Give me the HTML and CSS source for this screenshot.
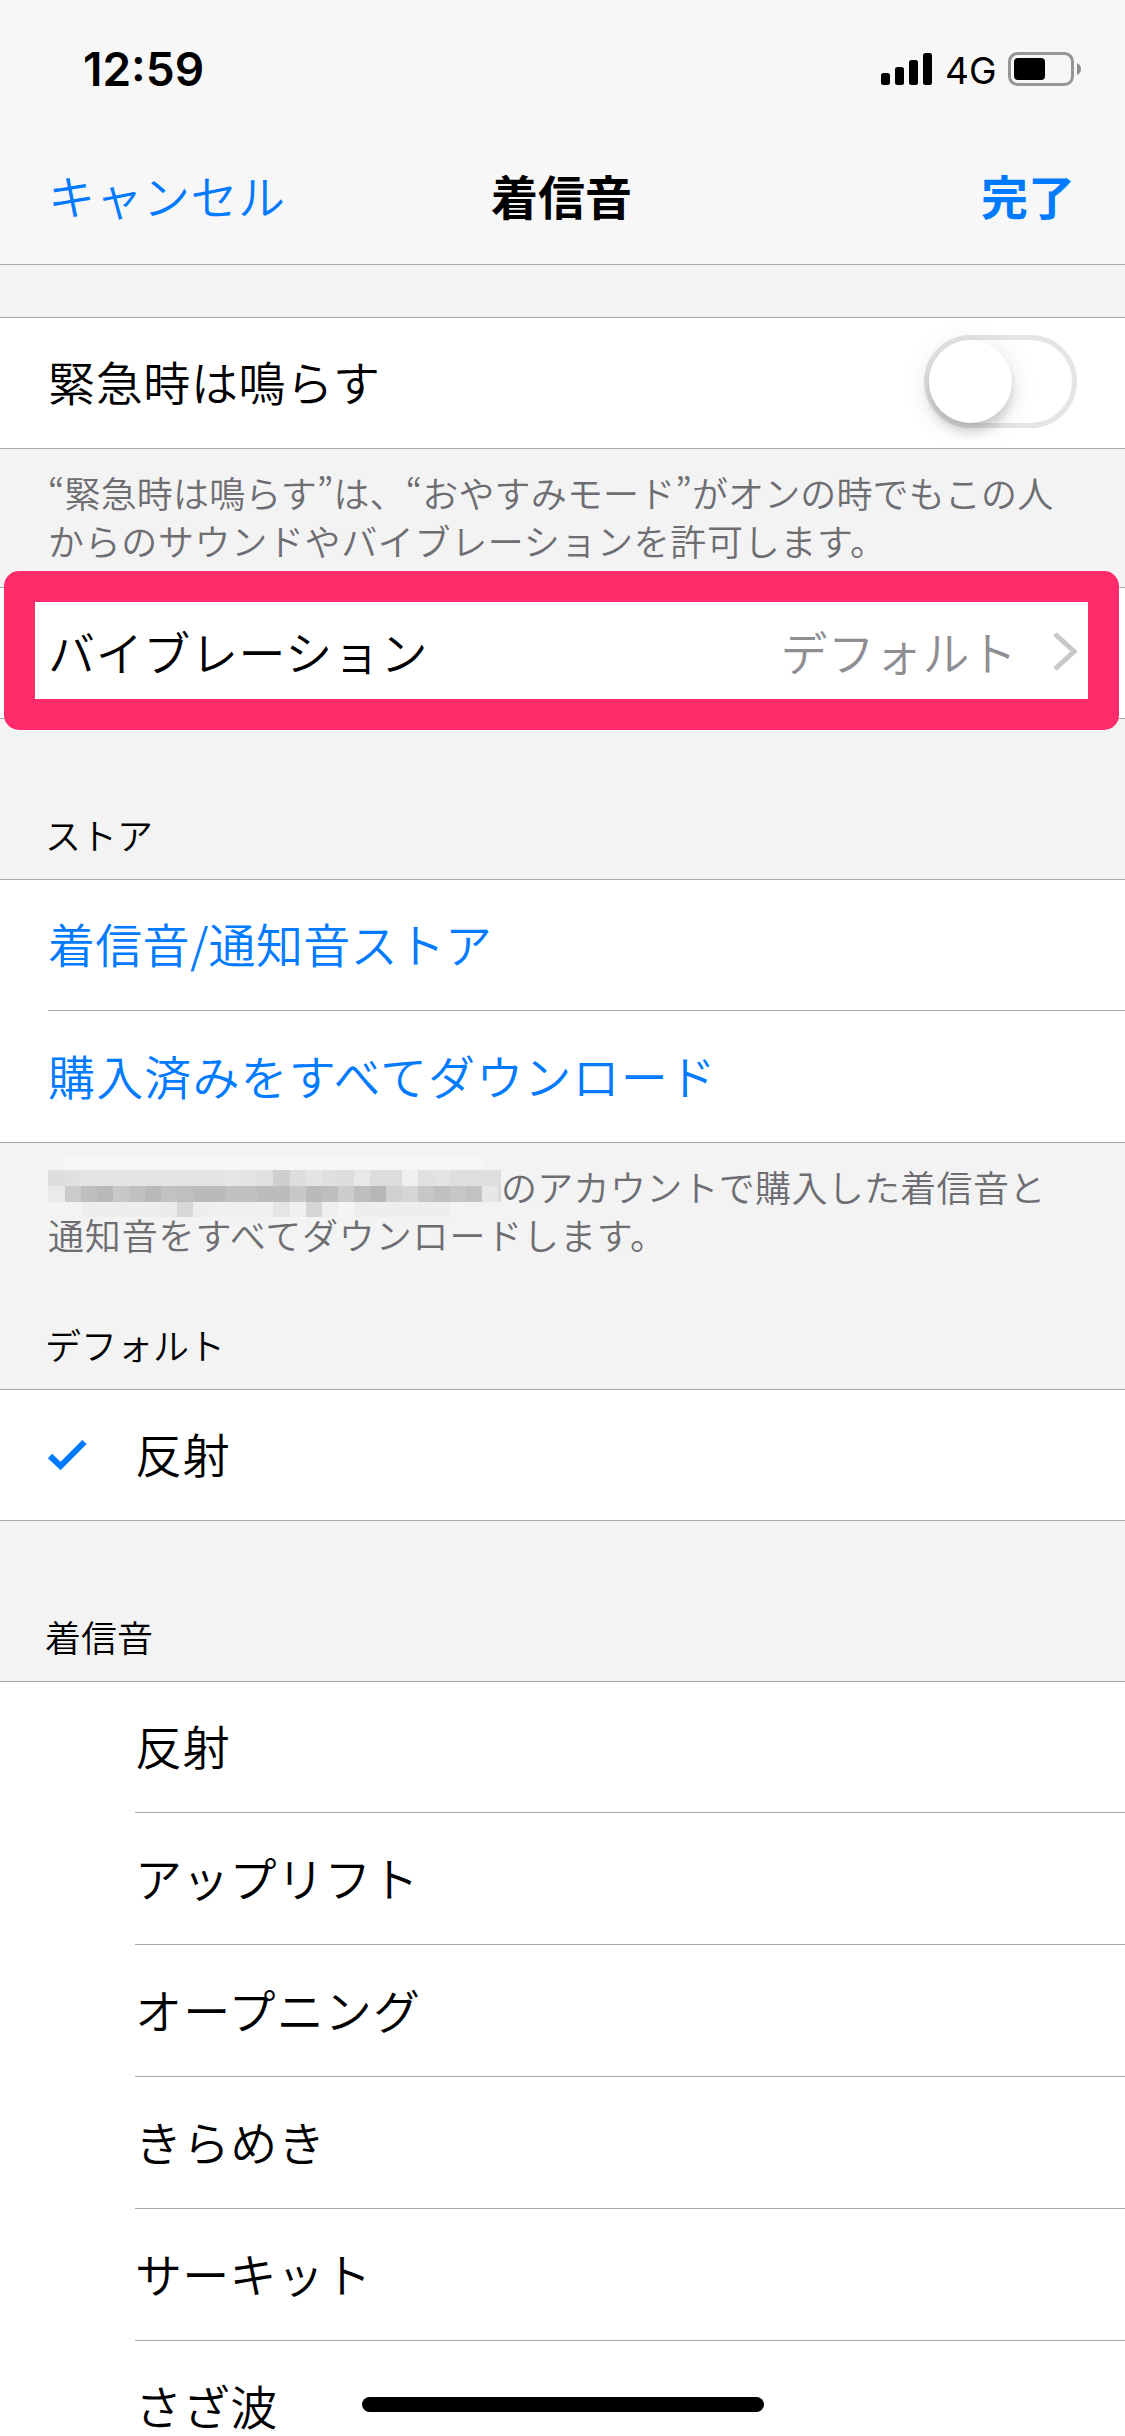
FILE: index.html
```html
<!DOCTYPE html>
<html lang="ja">
<head>
<meta charset="utf-8">
<title>着信音</title>
<link rel="stylesheet" href="styles.css">
</head>
<body>
<div class="screen">
  <header class="top">
    <div class="status">
      <span class="clock">12:59</span>
      <div class="indicators">
        <svg class="signal" width="51" height="34" viewBox="0 0 51 34"><rect x="0" y="20" width="9" height="12" rx="2.5"/><rect x="14" y="14" width="9" height="18" rx="2.5"/><rect x="28" y="7" width="9" height="25" rx="2.5"/><rect x="42" y="0" width="9" height="32" rx="2.5"/></svg>
        <span class="network">4G</span>
        <svg class="battery" width="73" height="34" viewBox="0 0 73 34"><rect x="1.5" y="1.5" width="63" height="31" rx="8" fill="none" stroke="#969696" stroke-width="3"/><rect x="6" y="6" width="31" height="22" rx="4"/><path d="M69 11Q73 13 73 17Q73 21 69 23Z" fill="#8c8c8c"/></svg>
      </div>
    </div>
    <nav class="nav">
      <a class="cancel">キャンセル</a>
      <h1 class="title">着信音</h1>
      <a class="done">完了</a>
    </nav>
  </header>
  <section class="group emergency">
    <div class="row"><span class="label">緊急時は鳴らす</span><span class="switch"><span class="knob"></span></span></div>
  </section>
  <p class="note note-emergency"><span class="line tight">“緊急時は鳴らす”は、“おやすみモード”がオンの時でもこの人</span><br><span class="line loose">からのサウンドやバイブレーションを許可します。</span></p>
  <section class="group vibration">
    <div class="row"><span class="label">バイブレーション</span><span class="detail"><span class="label value">デフォルト</span><svg class="chevron" width="24" height="39" viewBox="0 0 24 39"><path d="M2 2L21 19.5L2 37" fill="none" stroke="#c7c7cc" stroke-width="5"/></svg></span></div>
    <div class="highlight"></div>
  </section>
  <h2 class="heading heading-store">ストア</h2>
  <section class="group">
    <div class="row link"><span class="label narrow">着信音/通知音ストア</span></div>
    <div class="row link inset"><span class="label wide">購入済みをすべてダウンロード</span></div>
  </section>
  <p class="note note-store"><svg class="redacted" width="463" height="62" viewBox="0 0 463 62" shape-rendering="crispEdges">
      <path fill="#f6f6f6" d="M27 0H444V15H27Z"/>
      <path fill="#f4f4f4" d="M0 15H10V47H0Z"/>
      <g>
        <rect x="10" y="15" width="17" height="16" fill="#ddd"/><rect x="27" y="15" width="16" height="16" fill="#e0e0e0"/><rect x="43" y="15" width="144" height="16" fill="#e3e3e3"/><rect x="187" y="15" width="16" height="16" fill="#e7e7e7"/><rect x="203" y="15" width="16" height="16" fill="#e4e4e4"/><rect x="219" y="15" width="16" height="16" fill="#e1e1e1"/><rect x="235" y="15" width="17" height="16" fill="#cfcfcf"/><rect x="252" y="15" width="16" height="16" fill="#ddd"/><rect x="268" y="15" width="16" height="16" fill="#e4e4e4"/><rect x="284" y="15" width="16" height="16" fill="#dfdfdf"/><rect x="300" y="15" width="16" height="16" fill="#ddd"/><rect x="316" y="15" width="16" height="16" fill="#e8e8e8"/><rect x="332" y="15" width="32" height="16" fill="#dcdcdc"/><rect x="364" y="15" width="16" height="16" fill="#efefef"/><rect x="380" y="15" width="16" height="16" fill="#e0e0e0"/><rect x="396" y="15" width="16" height="16" fill="#e3e3e3"/><rect x="412" y="15" width="51" height="16" fill="#dedede"/>
      </g>
      <g>
        <rect x="10" y="31" width="17" height="16" fill="#eaeaea"/><rect x="27" y="31" width="16" height="16" fill="#cbcbcb"/><rect x="43" y="31" width="16" height="16" fill="#bebec0"/><rect x="59" y="31" width="16" height="16" fill="#b9b9bb"/><rect x="75" y="31" width="16" height="16" fill="#c8c8c8"/><rect x="91" y="31" width="16" height="16" fill="#c1c1c3"/><rect x="107" y="31" width="16" height="16" fill="#b9b9bb"/><rect x="123" y="31" width="16" height="16" fill="#c2c2c4"/><rect x="139" y="31" width="16" height="16" fill="#bfbfc1"/><rect x="155" y="31" width="32" height="16" fill="#bababc"/><rect x="187" y="31" width="32" height="16" fill="#c1c1c3"/><rect x="219" y="31" width="33" height="16" fill="#bcbcbe"/><rect x="252" y="31" width="16" height="16" fill="#c8c8ca"/><rect x="268" y="31" width="16" height="16" fill="#bababc"/><rect x="284" y="31" width="16" height="16" fill="#bebec0"/><rect x="300" y="31" width="16" height="16" fill="#ccc"/><rect x="316" y="31" width="16" height="16" fill="#bebec0"/><rect x="332" y="31" width="16" height="16" fill="#b6b6b6"/><rect x="348" y="31" width="16" height="16" fill="#d0d0d0"/><rect x="364" y="31" width="16" height="16" fill="#d5d5d5"/><rect x="380" y="31" width="16" height="16" fill="#c7c7c7"/><rect x="396" y="31" width="16" height="16" fill="#c0c0c2"/><rect x="412" y="31" width="16" height="16" fill="#c7c7c7"/><rect x="428" y="31" width="16" height="16" fill="#c2c2c4"/><rect x="444" y="31" width="16" height="16" fill="#e7e7e7"/><rect x="460" y="31" width="3" height="16" fill="#dadada"/>
      </g>
      <g>
        <rect x="43" y="47" width="80" height="15" fill="#eee"/><rect x="123" y="47" width="16" height="15" fill="#ebebeb"/><rect x="139" y="47" width="16" height="15" fill="#d8d8d8"/><rect x="155" y="47" width="16" height="15" fill="#eee"/><rect x="171" y="47" width="64" height="15" fill="#f0f0f0"/><rect x="235" y="47" width="17" height="15" fill="#e5e5e5"/><rect x="252" y="47" width="16" height="15" fill="#f0f0f0"/><rect x="268" y="47" width="16" height="15" fill="#d6d6d6"/><rect x="284" y="47" width="16" height="15" fill="#efefef"/><rect x="300" y="47" width="16" height="15" fill="#f5f5f5"/><rect x="316" y="47" width="96" height="15" fill="#eee"/>
      </g>
    </svg><span class="line">のアカウントで購入した着信音と</span><br><span class="line looser">通知音をすべてダウンロードします。</span></p>
  <h2 class="heading heading-default">デフォルト</h2>
  <section class="group">
    <div class="row tone"><svg class="check" width="42" height="34" viewBox="0 0 42 34"><path d="M3 17L13.5 27L37.5 3" fill="none" stroke="#007aff" stroke-width="6"/></svg><span class="label">反射</span></div>
  </section>
  <h2 class="heading heading-tones">着信音</h2>
  <section class="group tones">
    <div class="row tone"><span class="label">反射</span></div>
    <div class="row tone"><span class="label narrow">アップリフト</span></div>
    <div class="row tone"><span class="label wide">オープニング</span></div>
    <div class="row tone"><span class="label">きらめき</span></div>
    <div class="row tone"><span class="label narrow">サーキット</span></div>
    <div class="row tone"><span class="label">さざ波</span></div>
  </section>
  <div class="home"></div>
</div>
</body>
</html>
```
FILE: styles.css
```css
* { box-sizing: border-box; margin: 0; padding: 0; }
body { background: #f3f3f3; }
.screen {
  position: relative; width: 1125px; height: 2436px; overflow: hidden;
  background: #f3f3f3; color: #000;
  font-family: "Noto Sans CJK JP", sans-serif; font-weight: 350;
  font-size: 47px; line-height: 1;
}
svg { display: block; }
.top { height: 265px; background: #f7f7f7; border-bottom: 1px solid #aaa; }
.status { height: 132px; padding: 0 44px 0 83px; display: flex; justify-content: space-between; }
.clock { font: 600 46px/46px Inter, sans-serif; padding-top: 46px; }
.indicators { display: flex; padding-top: 52px; }
.signal { margin-top: 1px; }
.network { width: 49px; margin: 0 14px 0 13px; font: 400 37px/37px Inter, sans-serif; }
.nav { height: 132px; padding: 0 50px 7px 48px; display: grid; grid-template-columns: 1fr auto 1fr; align-items: center; }
.cancel, .done, .link { color: #007aff; }
.cancel { letter-spacing: .5px; }
.title { font-size: 47px; font-weight: 700; }
.done { font-weight: 700; text-align: right; }
.group { background: #fff; border-top: 1px solid #aaa; border-bottom: 1px solid #aaa; position: relative; }
.row { height: 130px; padding: 0 48px; display: flex; align-items: center; justify-content: space-between; }
.label { padding-bottom: 6px; letter-spacing: .65px; }
.narrow { letter-spacing: .3px; }
.wide { letter-spacing: 1.15px; }
.emergency { margin-top: 52px; }
.switch { width: 153px; height: 93px; border: 5px solid #e5e5e5; border-radius: 47px; margin-bottom: 4px; }
.knob { display: block; width: 83px; height: 83px; border-radius: 50%; background: #fff; box-shadow: 0 9px 10px rgba(0,0,0,.14), 0 5px 28px rgba(0,0,0,.12); }
.note { padding-left: 48px; color: #6d6d72; font-size: 36px; line-height: 48px; white-space: nowrap; }
.line { letter-spacing: .3px; }
.tight { letter-spacing: .14px; }
.loose { letter-spacing: .65px; }
.looser { letter-spacing: .85px; }
.note-emergency { height: 138px; padding-top: 19px; font-feature-settings: "pwid"; }
.detail { display: flex; align-items: center; gap: 36px; color: #8e8e93; }
.value { letter-spacing: .3px; }
.chevron { margin-bottom: 4px; }
.highlight { position: absolute; left: 4px; top: -17px; width: 1115px; height: 159px; border: 31px solid #ff2b6b; border-radius: 15px; }
.heading { padding-left: 45px; font-size: 36px; font-weight: 350; line-height: 48px; }
.heading-store { height: 160px; padding-top: 91px; }
.inset { position: relative; height: 132px; padding-top: 2px; }
.inset::before { content: ""; position: absolute; left: 48px; right: 0; top: 0; height: 1px; background: #aaa; }
.note-store { height: 140px; padding-top: 19px; }
.redacted { display: inline-block; vertical-align: top; margin: -7px 0 -7px -10px; }
.heading-default { height: 106px; padding-top: 37px; }
.tone { padding-left: 135px; position: relative; justify-content: flex-start; }
.check { position: absolute; left: 47px; top: 49px; }
.heading-tones { height: 160px; padding-top: 91px; }
.tones .tone { height: 132px; padding-top: 2px; }
.tones .tone:first-child { height: 130px; padding-top: 0; }
.tones .tone + .tone::before { content: ""; position: absolute; left: 135px; right: 0; top: 0; height: 1px; background: #aaa; }
.home { position: absolute; left: 362px; top: 2397px; width: 402px; height: 15px; border-radius: 8px; background: #000; }
```
